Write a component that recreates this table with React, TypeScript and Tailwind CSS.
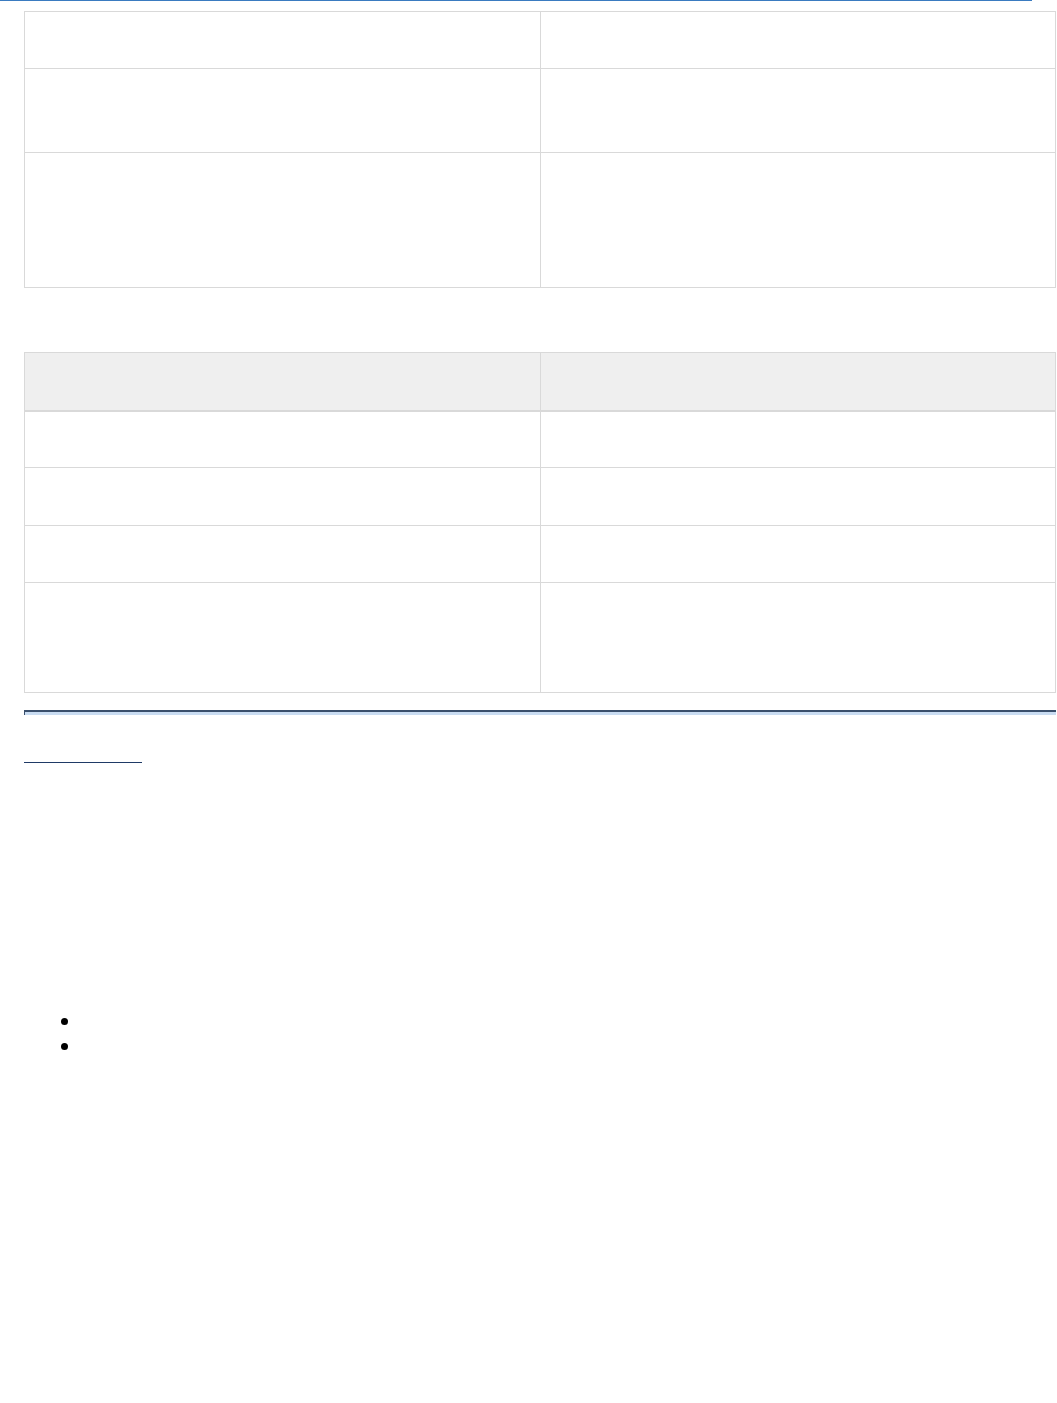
import React from 'react'

const first = [57, 84, 135]
const second = [57, 58, 57, 110]

function Grid({ rows, head }: { rows: number[]; head?: boolean }) {
  return (
    <table className="w-[1032px] border-collapse table-fixed">
      <tbody>
        {head && (
          <tr className="h-[58px] bg-[#efefef] border-b-2 border-[#d9d9d9]">
            <td className="w-[516px] border border-[#d9d9d9]" />
            <td className="border border-[#d9d9d9]" />
          </tr>
        )}
        {rows.map((h, i) => (
          <tr key={i} style={{ height: h }}>
            <td className="w-[516px] border border-[#d9d9d9]" />
            <td className="border border-[#d9d9d9]" />
          </tr>
        ))}
      </tbody>
    </table>
  )
}

export default function App() {
  return (
    <div className="min-h-[1403px] bg-white font-['Liberation_Sans',sans-serif]">
      <div className="h-px w-[1032px] bg-[#3a7bc0]" />
      <div className="pl-[24px] pt-[10px]">
        <Grid rows={first} />
        <div className="mt-[64px]">
          <Grid rows={second} head />
        </div>
        <div className="mt-[17px] w-[1032px] h-[5px] border-t-2 border-l border-[#3a4f6c] bg-[#c9dcf2]" />
        <div className="mt-[47px] w-[118px] h-px bg-[#1f3a66]" />
        <ul className="mt-[255px] pl-[37px] flex flex-col gap-[18px]">
          <li className="flex items-center h-[7px]"><span className="w-[7px] h-[7px] rounded-full bg-black" /></li>
          <li className="flex items-center h-[7px]"><span className="w-[7px] h-[7px] rounded-full bg-black" /></li>
        </ul>
      </div>
    </div>
  )
}
